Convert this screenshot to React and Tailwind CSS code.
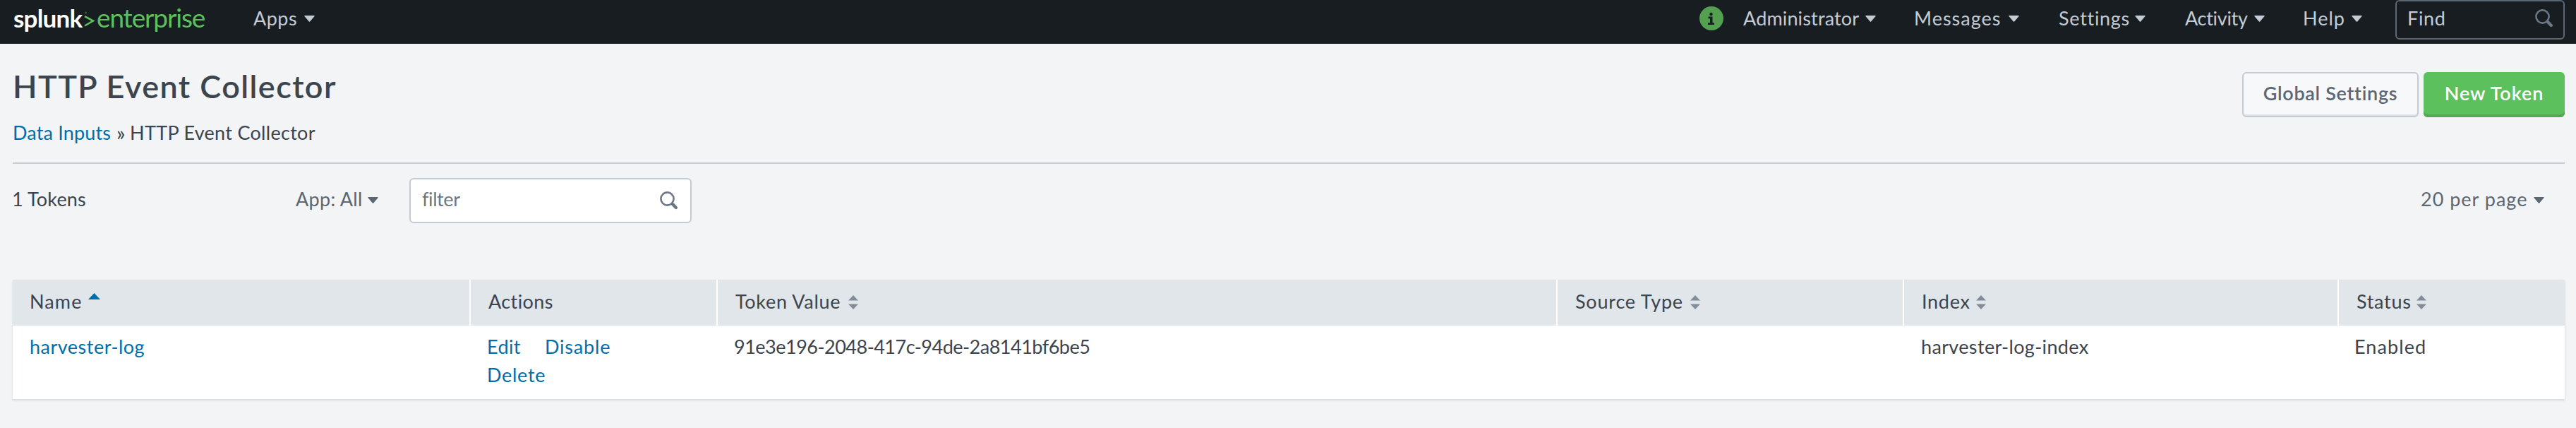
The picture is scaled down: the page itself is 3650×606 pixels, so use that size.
function Caret({ className = "" }) {
  return (
    <svg className={`h-[9px] w-[15px] shrink-0 ${className}`} viewBox="0 0 15 9" fill="currentColor">
      <path d="M1 0h13q1 0.3 .6 1L8.200 8.400q-.7.7-1.400 0L.4 1Q0 .3 1 0z" />
    </svg>
  );
}

function Magnifier({ className = "" }) {
  return (
    <svg className={`h-[26px] w-[26px] shrink-0 ${className}`} viewBox="0 0 26 26" fill="none" stroke="currentColor" strokeLinecap="round">
      <circle cx="10.500" cy="10.500" r="9.100" strokeWidth="2.600" />
      <path d="M17.800 17.800L22.800 23" strokeWidth="4.400" />
    </svg>
  );
}

function Sorter() {
  return (
    <svg className="h-5 w-[14px] shrink-0" viewBox="0 0 14 20" fill="#818d99">
      <path d="M7 0l7 7.500H0zM7 20l7-7.500H0z" />
    </svg>
  );
}

function NavItem({ label, className }) {
  return (
    <div className={`flex shrink-0 items-center justify-between ${className}`}>
      <span>{label}</span>
      <Caret />
    </div>
  );
}

function HeadCell({ label, className = "", inner = "", sortable = true }) {
  return (
    <div className={`flex items-center pb-[2px] pl-[25px] ${className}`}>
      <div className={`flex items-center justify-between ${inner}`}>
        <span className="pb-[2px]">{label}</span>
        {sortable && <Sorter />}
      </div>
    </div>
  );
}

function Header() {
  return (
    <header className="flex h-[62px] items-start bg-[#171d21] pr-4 text-[#c3cbd4]">
      <div className="ml-[19px] flex h-[50px] w-[340px] items-center leading-[50px]">
        <span className="w-[100px] text-[35px] font-bold tracking-[-0.800px] text-white">splunk</span>
        <svg className="mt-[3px] h-[24px] w-[16px] shrink-0" viewBox="0 0 16 24" fill="none" stroke="#5cc05c">
          <path d="M1 8.200L13 14.500 1 21.500" strokeWidth="2.600" />
          <circle cx="2.500" cy="3" r="1" strokeWidth="1" opacity=".5" />
        </svg>
        <span className="ml-[2px] text-[37px] tracking-[-1.150px] text-[#5cc05c]">enterprise</span>
      </div>
      <div className="flex h-[52px] flex-1 items-center">
        <NavItem label="Apps" className="w-[87px] tracking-[0.500px]" />
        <div className="flex-1" />
        <svg className="mr-7 h-[34px] w-[34px] shrink-0" viewBox="0 0 34 34">
          <circle cx="17" cy="17" r="17" fill="#53a051" />
          <circle cx="16.500" cy="11" r="2.200" fill="#171d21" />
          <path d="M12.500 14.500h6v8.800h2.500V26h-9v-2.700h3v-6h-2.500z" fill="#171d21" />
        </svg>
        <NavItem label="Administrator" className="mr-[54px] w-[188px] tracking-[0.150px]" />
        <NavItem label="Messages" className="mr-[56px] w-[149px] tracking-[1px]" />
        <NavItem label="Settings" className="mr-[56px] w-[123px] tracking-[0.700px]" />
        <NavItem label="Activity" className="mr-[54px] w-[113px] tracking-[-0.300px]" />
        <NavItem label="Help" className="mr-[47px] w-[84px] tracking-[1px]" />
      </div>
      <div className="flex h-[56px] w-60 items-center justify-between rounded-[6px] border-2 border-[#5c6773] pr-[14px] pb-1 pl-[15px]">
        <span className="tracking-[0.700px]">Find</span>
        <Magnifier className="text-[#6b7785]" />
      </div>
    </header>
  );
}

const columns = "grid grid-cols-[649px_350px_1190px_491px_616px_1fr]";

export default function App() {
  return (
    <div className="flex h-[606px] w-[3650px] flex-col bg-[#f2f4f5] font-['Lato','Liberation_Sans',sans-serif] text-[27px] leading-[40px] whitespace-nowrap text-[#3c444d]">
      <Header />

      <section className="mr-4 ml-[18px] flex h-[170px] items-start justify-between border-b-2 border-[#c3cbd4]">
        <div>
          <h1 className="mt-[30px] text-[45px] leading-[60px] font-semibold tracking-[1.400px]">HTTP Event Collector</h1>
          <div className="mt-4 flex">
            <a className="w-[147px] tracking-[0.150px] text-[#006eaa]">Data Inputs</a>
            <span className="w-[19px] text-[29px]">»</span>
            <span className="tracking-[0.300px]">HTTP Event Collector</span>
          </div>
        </div>
        <div className="mt-10 flex gap-[7px] font-semibold">
          <button className="flex h-16 w-[250px] items-center justify-center rounded-[6px] border-2 border-[#c3cbd4] bg-[#f7f8fa] pb-1 tracking-[0.700px] text-[#5c6773] shadow-[inset_0_-2px_0_#dfe3e6]">
            Global Settings
          </button>
          <button className="flex h-16 w-[200px] items-center justify-center rounded-[6px] bg-[#5cc05c] pb-1 tracking-[0.900px] text-white shadow-[inset_0_-4px_0_#53a851]">
            New Token
          </button>
        </div>
      </section>

      <section className="mt-5 mr-[45px] ml-[17px] flex h-16 items-center">
        <span className="w-[402px] pb-[5px] tracking-[0.150px]">1 Tokens</span>
        <div className="flex w-[117px] items-center justify-between pb-[2px] tracking-[0.300px] text-[#5c6773]">
          <span className="pb-[3px]">App: All</span>
          <Caret />
        </div>
        <div className="ml-11 flex h-16 w-[400px] items-center justify-between rounded-[6px] border-2 border-[#c3cbd4] bg-white pr-[17px] pl-[16px] text-[#6b7785]">
          <span className="pb-[5px] tracking-[-0.400px]">filter</span>
          <Magnifier />
        </div>
        <div className="ml-auto flex w-[175px] items-center justify-between pb-[2px] tracking-[1px] text-[#5c6773]">
          <span className="pb-[3px]">20 per page</span>
          <Caret />
        </div>
      </section>

      <section className="mt-20 mr-4 ml-[18px] shadow-[0_2px_3px_rgba(60,80,100,0.15)]">
        <div className={`${columns} h-[65px] bg-[#e1e6eb]`}>
          <div className="flex items-center border-r-2 border-white pb-1 pl-[24px]">
            <span className="tracking-[1.100px]">Name</span>
            <svg className="mb-[15px] ml-[8px] h-[9px] w-[17px]" viewBox="0 0 17 9" fill="#006eaa">
              <path d="M8.500 0L17 9H0z" />
            </svg>
          </div>
          <HeadCell label="Actions" sortable={false} className="border-r-2 border-white" inner="tracking-[0.400px]" />
          <HeadCell label="Token Value" className="border-r-2 border-white" inner="w-[174px] tracking-[0.700px]" />
          <HeadCell label="Source Type" className="border-r-2 border-white" inner="w-[177px] tracking-[0.800px]" />
          <HeadCell label="Index" className="border-r-2 border-white" inner="w-[91px] tracking-[0.700px]" />
          <HeadCell label="Status" inner="w-[99px] tracking-[0.700px]" />
        </div>
        <div className={`${columns} h-[104px] bg-white pt-[10px]`}>
          <a className="pl-[24px] tracking-[0.500px] text-[#006eaa]">harvester-log</a>
          <div className="flex flex-wrap content-start pl-[23px] text-[#006eaa]">
            <a className="w-[82px] tracking-[0.400px]">Edit</a>
            <a className="w-[160px] tracking-[0.800px]">Disable</a>
            <a className="basis-full tracking-[0.700px]">Delete</a>
          </div>
          <span className="pl-[23px] tracking-[-0.500px]">91e3e196-2048-417c-94de-2a8141bf6be5</span>
          <span />
          <span className="pl-[24px] tracking-[0.350px]">harvester-log-index</span>
          <span className="pl-[22px] tracking-[1.100px]">Enabled</span>
        </div>
      </section>
    </div>
  );
}
